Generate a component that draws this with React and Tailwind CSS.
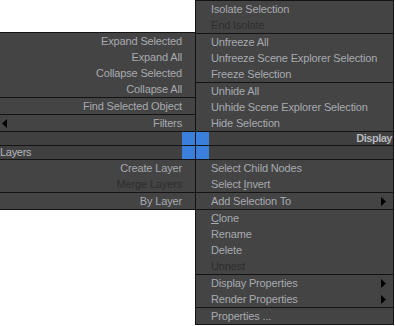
import React from "react";

const Sep = () => <div className="h-px bg-[#141414]" />;

const Arrow = () => (
  <svg width="5" height="9" viewBox="0 0 5 9" className="block">
    <polygon points="0,0 5,4.5 0,9" fill="#000" />
  </svg>
);

const LeftArrow = () => (
  <svg width="5" height="9" viewBox="0 0 5 9" className="block">
    <polygon points="5,0 0,4.5 5,9" fill="#000" />
  </svg>
);

function LItem({ children, disabled }) {
  return (
    <div
      className={`h-4 flex items-center justify-end pr-[13px] ${
        disabled ? "text-[#2e2e2e]" : "text-[#a7aab0]"
      }`}
    >
      {children}
    </div>
  );
}

function RItem({ children, disabled, sub }) {
  return (
    <div
      className={`h-4 flex items-center pl-[15px] pr-[7px] ${
        disabled ? "text-[#2e2e2e]" : "text-[#a7aab0]"
      }`}
    >
      <span className="flex-1">{children}</span>
      {sub && <Arrow />}
    </div>
  );
}

export default function App() {
  return (
    <div className="w-[395px] h-[326px] bg-white flex items-start font-['Liberation_Sans',Arial,sans-serif] text-[11px] leading-none tracking-[-0.15px] overflow-hidden">
      {/* Left menu */}
      <div className="w-[195px] mt-[32px] bg-[#444444] border-t border-b border-[#141414]">
        <LItem>Expand Selected</LItem>
        <LItem>Expand All</LItem>
        <LItem>Collapse Selected</LItem>
        <LItem>Collapse All</LItem>
        <Sep />
        <LItem>Find Selected Object</LItem>
        <Sep />
        <div className="h-4 flex items-center pl-[2px] pr-[13px] text-[#a7aab0]">
          <LeftArrow />
          <span className="flex-1 text-right">Filters</span>
        </div>
        <Sep />
        <div className="h-[13px] flex bg-[#404040]">
          <div className="flex-1" />
          <div className="w-[13px] bg-[#3a7fdc]" />
        </div>
        <Sep />
        <div className="h-[13px] flex items-center bg-[#404040]">
          <span className="flex-1 text-[#b4b7bc] tracking-[-0.3px]">Layers</span>
          <div className="w-[13px] h-[13px] bg-[#3a7fdc]" />
        </div>
        <Sep />
        <LItem>Create Layer</LItem>
        <LItem disabled>Merge Layers</LItem>
        <Sep />
        <LItem>By Layer</LItem>
      </div>

      {/* Right menu */}
      <div className="w-[199px] bg-[#444444] border border-[#141414]">
        <RItem>Isolate Selection</RItem>
        <RItem disabled>End Isolate</RItem>
        <Sep />
        <RItem>Unfreeze All</RItem>
        <RItem>Unfreeze Scene Explorer Selection</RItem>
        <RItem>Freeze Selection</RItem>
        <Sep />
        <RItem>Unhide All</RItem>
        <RItem>Unhide Scene Explorer Selection</RItem>
        <RItem>Hide Selection</RItem>
        <Sep />
        <div className="h-[13px] flex items-center bg-[#404040]">
          <div className="w-[13px] h-[13px] bg-[#3a7fdc]" />
          <span className="flex-1 text-right pr-[1px] text-[#b4b7bc] font-bold tracking-[-0.5px]">Display</span>
        </div>
        <Sep />
        <div className="h-[13px] flex bg-[#404040]">
          <div className="w-[13px] bg-[#3a7fdc]" />
        </div>
        <Sep />
        <RItem>Select Child Nodes</RItem>
        <RItem>
          Select <span className="underline">I</span>nvert
        </RItem>
        <Sep />
        <RItem sub>Add Selection To</RItem>
        <Sep />
        <RItem>
          <span className="underline">C</span>lone
        </RItem>
        <RItem>Rename</RItem>
        <RItem>Delete</RItem>
        <RItem disabled>Unnest</RItem>
        <Sep />
        <RItem sub>Display Properties</RItem>
        <RItem sub>Render Properties</RItem>
        <Sep />
        <RItem>Properties ...</RItem>
      </div>
    </div>
  );
}
